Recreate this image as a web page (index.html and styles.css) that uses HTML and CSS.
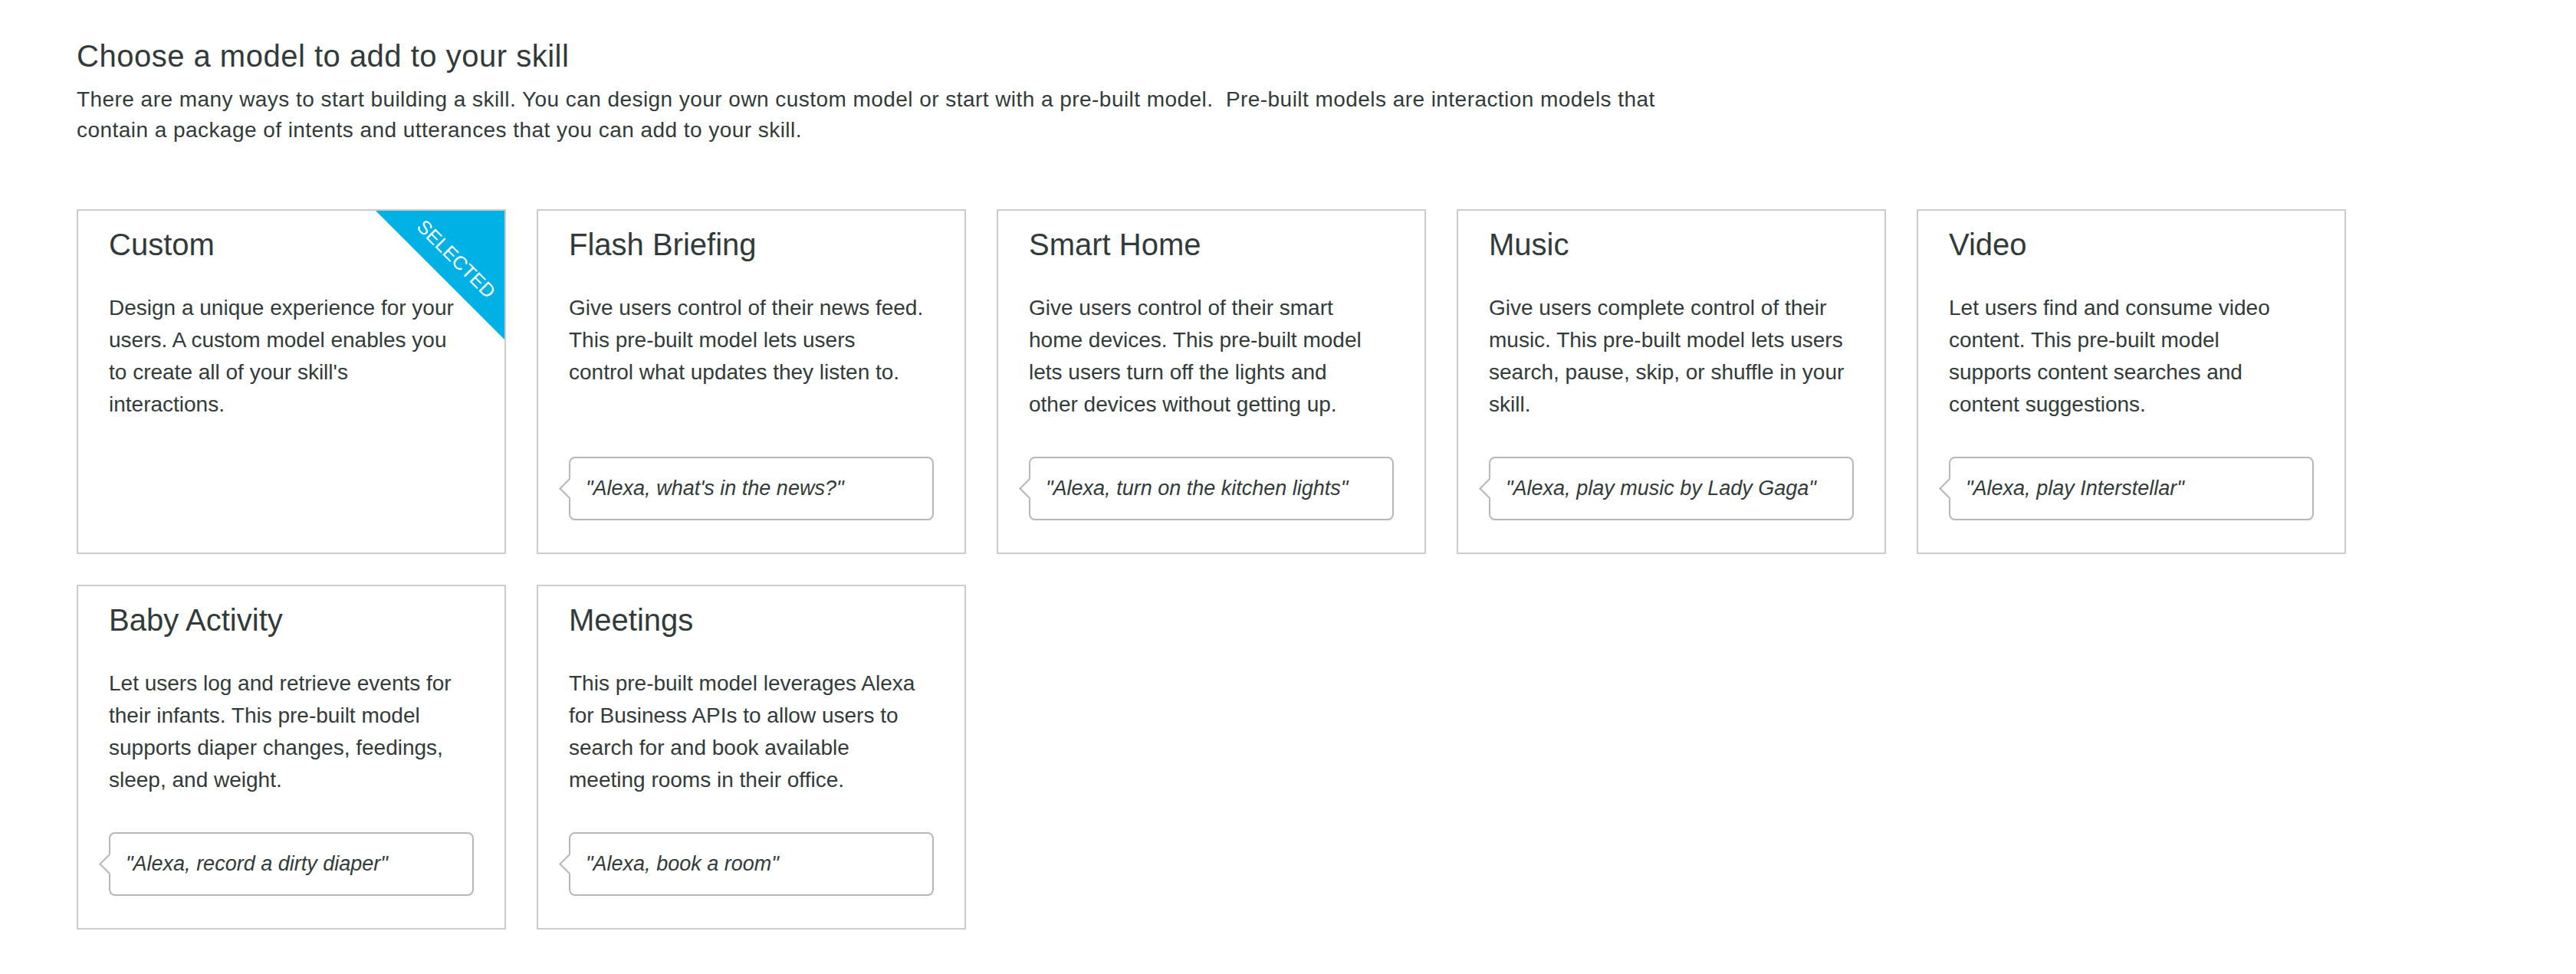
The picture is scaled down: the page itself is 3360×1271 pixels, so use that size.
FILE: index.html
```html
<!DOCTYPE html>
<html lang="en">
<head>
<meta charset="utf-8">
<title>Choose a model to add to your skill</title>
<link rel="stylesheet" href="styles.css">
</head>
<body>
<main class="page">
  <h1 class="page-title">Choose a model to add to your skill</h1>
  <p class="page-desc">There are many ways to start building a skill. You can design your own custom model or start with a pre-built model.&nbsp; Pre-built models are interaction models that<br>contain a package of intents and utterances that you can add to your skill.</p>

  <div class="models">
    <div class="model-card selected">
      <div class="ribbon"><span>SELECTED</span></div>
      <h2 class="model-title">Custom</h2>
      <p class="model-desc">Design a unique experience for your<br>users. A custom model enables you<br>to create all of your skill's<br>interactions.</p>
    </div>

    <div class="model-card">
      <h2 class="model-title">Flash Briefing</h2>
      <p class="model-desc">Give users control of their news feed.<br>This pre-built model lets users<br>control what updates they listen to.</p>
      <div class="utterance">"Alexa, what's in the news?"</div>
    </div>

    <div class="model-card">
      <h2 class="model-title">Smart Home</h2>
      <p class="model-desc">Give users control of their smart<br>home devices. This pre-built model<br>lets users turn off the lights and<br>other devices without getting up.</p>
      <div class="utterance">"Alexa, turn on the kitchen lights"</div>
    </div>

    <div class="model-card">
      <h2 class="model-title">Music</h2>
      <p class="model-desc">Give users complete control of their<br>music. This pre-built model lets users<br>search, pause, skip, or shuffle in your<br>skill.</p>
      <div class="utterance">"Alexa, play music by Lady Gaga"</div>
    </div>

    <div class="model-card">
      <h2 class="model-title">Video</h2>
      <p class="model-desc">Let users find and consume video<br>content. This pre-built model<br>supports content searches and<br>content suggestions.</p>
      <div class="utterance">"Alexa, play Interstellar"</div>
    </div>

    <div class="model-card">
      <h2 class="model-title">Baby Activity</h2>
      <p class="model-desc">Let users log and retrieve events for<br>their infants. This pre-built model<br>supports diaper changes, feedings,<br>sleep, and weight.</p>
      <div class="utterance">"Alexa, record a dirty diaper"</div>
    </div>

    <div class="model-card">
      <h2 class="model-title">Meetings</h2>
      <p class="model-desc">This pre-built model leverages Alexa<br>for Business APIs to allow users to<br>search for and book available<br>meeting rooms in their office.</p>
      <div class="utterance">"Alexa, book a room"</div>
    </div>
  </div>
</main>
</body>
</html>
```
FILE: styles.css
```css
html, body {
  background: #ffffff;
}

body {
  margin: 0;
  font-family: "Liberation Sans", Arial, sans-serif;
  color: #333a3a;
}

.page {
  padding: 49px 100px 0;
}

.page-title {
  margin: 0;
  font-size: 40px;
  font-weight: 400;
  line-height: 48px;
  letter-spacing: 0.5px;
}

.page-desc {
  margin: 13px 0 0;
  font-size: 28px;
  line-height: 40px;
  letter-spacing: 0.45px;
}

.models {
  margin-top: 83px;
  display: grid;
  grid-template-columns: repeat(5, 560px);
  gap: 40px;
}

.model-card {
  position: relative;
  box-sizing: border-box;
  height: 450px;
  border: 2px solid #cccccc;
  background: #ffffff;
  padding: 20px 40px 42px;
  display: flex;
  flex-direction: column;
}

.model-title {
  margin: 0;
  font-size: 40px;
  font-weight: 400;
  line-height: 48px;
}

.model-desc {
  margin: 38px 0 0;
  font-size: 28px;
  line-height: 42px;
}

.utterance {
  position: relative;
  margin-top: auto;
  border: 2px solid #b4b8bd;
  border-radius: 8px;
  padding: 20px 20px;
  font-size: 27px;
  line-height: 39px;
  font-style: italic;
  white-space: nowrap;
}

.utterance::before {
  content: "";
  position: absolute;
  box-sizing: border-box;
  left: -11px;
  top: 50%;
  width: 19px;
  height: 19px;
  margin-top: -9.5px;
  background: #ffffff;
  border-left: 2px solid #b4b8bd;
  border-bottom: 2px solid #b4b8bd;
  transform: rotate(45deg);
}

.ribbon {
  position: absolute;
  top: 0;
  right: 0;
  width: 168px;
  height: 168px;
  background: #00b1e6;
  clip-path: polygon(0 0, 100% 0, 100% 100%);
}

.ribbon span {
  position: absolute;
  left: 105px;
  top: 63px;
  transform: translate(-50%, -50%) rotate(45deg);
  color: #ffffff;
  font-size: 25px;
  line-height: 1;
  white-space: nowrap;
}
```
